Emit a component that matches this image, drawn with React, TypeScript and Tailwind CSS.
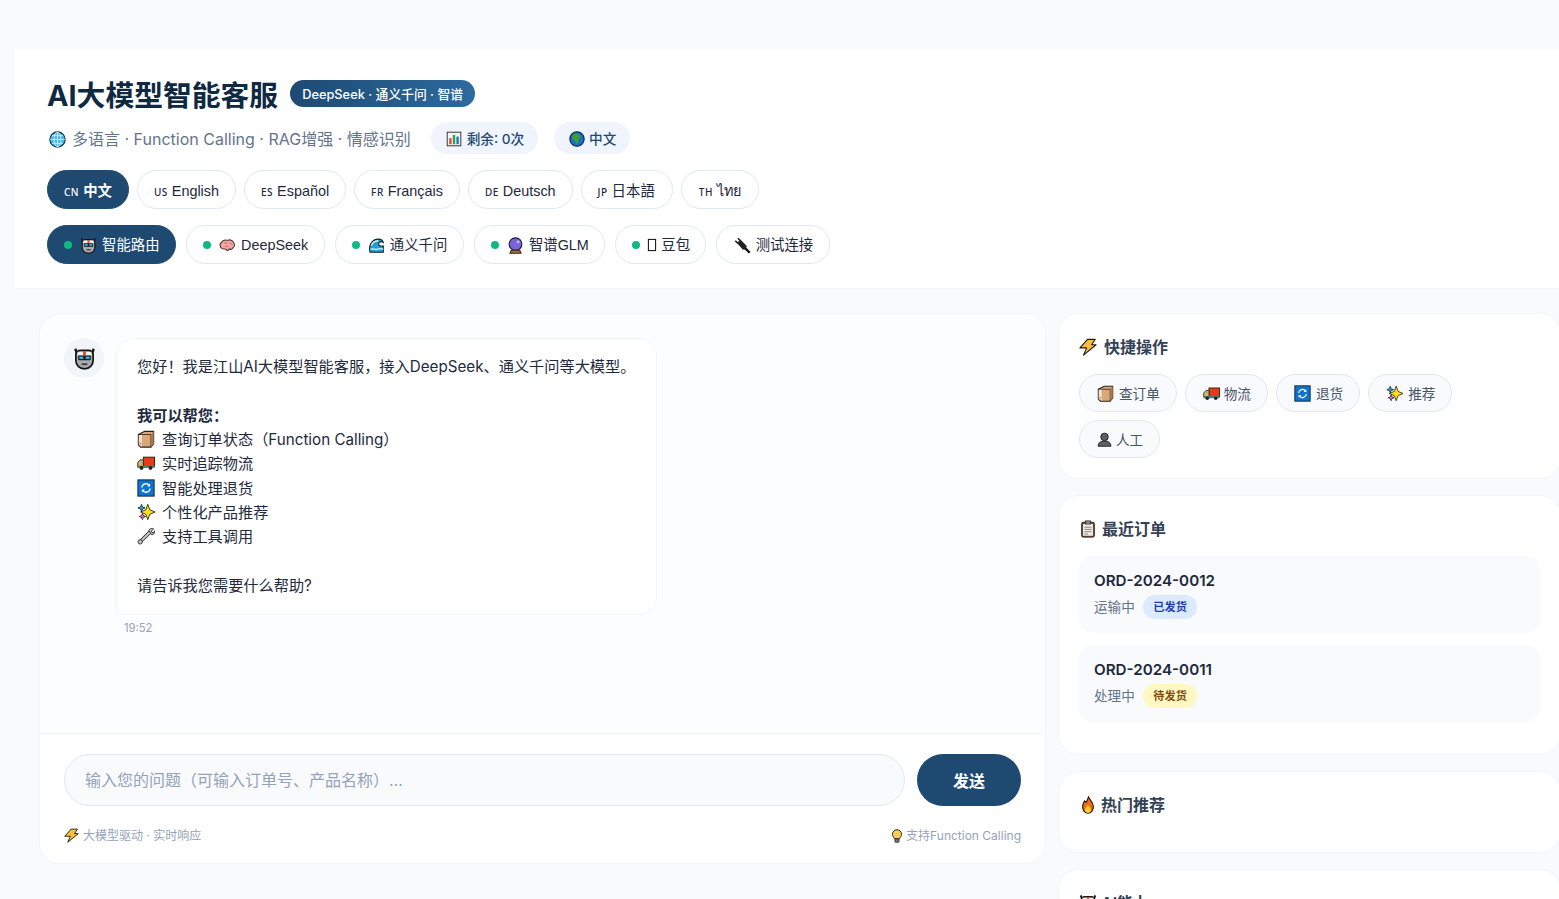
import React from 'react';

type EmojiName =
  | 'robot' | 'brain' | 'wave' | 'crystal' | 'plug' | 'box' | 'truck' | 'refresh' | 'sparkle'
  | 'wrench' | 'bolt' | 'clipboard' | 'fire' | 'bulb' | 'person' | 'globe' | 'chart' | 'earth' | 'tofu';

// windows-style outlined emoji, the stock ones don't look like the screenshot
const emojiShapes: Record<EmojiName, React.ReactNode> = {
  robot: (
    <>
      <path d="M2 1.500 3.500 6M18 1.500 16.500 6" stroke="#1c1c1c" strokeWidth="2.200" fill="none" />
      <path d="M2.500 6.500C2.500 4.500 4.500 3 6.500 3h7c2 0 4 1.500 4 3.500v5C17.500 16 14.500 19 10 19s-7.500-3-7.500-7.500z" fill="#a9abad" stroke="#161616" strokeWidth="1.500" />
      <path d="M4 4.200h12v3H4z" fill="#f2f2f2" />
      <rect x="8.800" y="3.600" width="2.400" height="3.400" fill="#e8442a" />
      <rect x="4.500" y="7.300" width="11" height="4.200" rx="1" fill="#161616" />
      <rect x="5.500" y="8.300" width="3.500" height="2.100" fill="#35b6e8" />
      <rect x="11" y="8.300" width="3.500" height="2.100" fill="#35b6e8" />
      <rect x="7.500" y="14.200" width="5" height="1.500" fill="#3a3a3a" />
    </>
  ),
  brain: (
    <>
      <path d="M3 6.500C4 3.500 8 3 10 4c3-1.500 6 0 7 2.500 1.800 1.500 1.600 5-.6 6-.6 2-3 2.600-4.400 1.500-.6 1.500-2 2.500-3 1.500-.3-1.200-1-1.500-2-1.500-3 .5-5.200-1-5.500-3.500C1 9 1.500 7.200 3 6.500z" fill="#f4a6a8" stroke="#4a2a2c" strokeWidth="1.200" />
      <path d="M6 7c2-1 3 .5 4 1.500M12 6.500c1 1.500 3 1 3.500 2.500M7 11c1.500-.5 3 0 4 1" stroke="#b9595f" strokeWidth="1" fill="none" />
    </>
  ),
  wave: (
    <>
      <path d="M2 16C1 8 6 2.500 12 2.500c3 0 5.500 1.500 6 4-2-1.500-5-1-5.500 1.500-.3 2 2 3 5.500 2.500V18H2.500z" fill="#1f9fd8" stroke="#14202a" strokeWidth="1.300" />
      <path d="M4 10c1-3 4-5.500 8-5.500" stroke="#fff" strokeWidth="1.600" fill="none" />
      <path d="M3 14.500c3-1.500 5 1 7.500 0s5-1 7.500 0" stroke="#d9f3ff" strokeWidth="1.500" fill="none" />
    </>
  ),
  crystal: (
    <>
      <circle cx="10" cy="8.500" r="7.500" fill="#7b62d6" stroke="#241a4a" strokeWidth="1.300" />
      <path d="M13 3.500l.7 1.600 1.600.7-1.600.7-.7 1.600-.7-1.600-1.600-.7 1.600-.7z" fill="#bfe1ff" />
      <path d="M5 15.500h10l1.500 3.500h-13z" fill="#a5703f" stroke="#33210f" strokeWidth="1.200" />
    </>
  ),
  plug: (
    <>
      <path d="M4.500 1.500l3 3M1.500 4.500l3 3" stroke="#222" strokeWidth="1.700" />
      <path d="M3.500 7 7.500 3l7.500 7.500-1 3.500-3.500 1z" fill="#222" />
      <path d="M13 13l5.500 5.500" stroke="#111" strokeWidth="2.800" />
    </>
  ),
  box: (
    <>
      <path d="M1.500 5 8.500 1.500H18.500v13.500L15.500 19H4L1.500 16.500z" fill="#d9a878" stroke="#2a2018" strokeWidth="1.200" />
      <path d="M1.500 5h14V19" fill="none" stroke="#2a2018" strokeWidth=".9" />
      <path d="M15.500 5 18.500 1.500v13.500L15.500 19z" fill="#a8794e" />
      <path d="M2 5.500h3.500V18.500L2 16.200z" fill="#f0e2d2" />
      <circle cx="3.800" cy="15" r="1" fill="#e25c7a" />
    </>
  ),
  truck: (
    <>
      <rect x="7" y="3.500" width="12.500" height="10.500" fill="#e83a17" stroke="#2a1a14" strokeWidth="1" />
      <path d="M.8 14V9.500L3.500 6.500H7v7.500z" fill="#e8b34a" stroke="#20302e" strokeWidth="1" />
      <path d="M2.300 9.800 4 8h2v1.800z" fill="#6ec4d8" />
      <rect x=".5" y="13" width="19" height="2.500" fill="#4d7a78" />
      <circle cx="5" cy="15.500" r="2.100" fill="#222" />
      <circle cx="15" cy="15.500" r="2.100" fill="#222" />
    </>
  ),
  refresh: (
    <>
      <rect x="1" y="1" width="18" height="18" fill="#0f74d0" stroke="#10233a" strokeWidth="1.100" />
      <path d="M5.500 9.500A4.500 4.500 0 0 1 13.500 7M14.500 10.500A4.500 4.500 0 0 1 6.500 13" fill="none" stroke="#fff" strokeWidth="1.400" />
      <path d="M14.500 5v3.200h-3.200zM5.500 15v-3.200h3.200z" fill="#fff" />
    </>
  ),
  sparkle: (
    <>
      <path d="M12 1.500l2.200 6 5.800 2.500-5.800 2.500-2.200 6-2.200-6L4 10l5.800-2.500z" fill="#ffe21a" stroke="#2b2a10" strokeWidth="1" />
      <path d="M5 1.500l1.100 2.900L9 5.500 6.100 6.600 5 9.500 3.900 6.600 1 5.500l2.900-1.100z" fill="#2aa6d6" stroke="#12222a" strokeWidth=".9" />
      <path d="M6 11.500l1 2.500 2.500 1-2.500 1-1 2.500-1-2.500-2.500-1 2.500-1z" fill="#e47ac2" stroke="#2a1222" strokeWidth=".9" />
    </>
  ),
  wrench: (
    <>
      <path d="M3.500 16.500 14.500 5.500" stroke="#2a2a2a" strokeWidth="4" />
      <path d="M3.500 16.500 14.500 5.500" stroke="#c9c9c9" strokeWidth="2.200" />
      <path d="M13 3.500c1.500-2 4-2.300 5.500-1.500l-2.500 2.500.5 1.500 1.500.5L20 4c.5 2-1 4.500-4 4.500z" fill="#c9c9c9" stroke="#2a2a2a" strokeWidth="1" />
      <circle cx="3.500" cy="16.500" r="2.400" fill="#c9c9c9" stroke="#2a2a2a" strokeWidth="1" />
    </>
  ),
  bolt: (
    <path d="M9.500 1.500h8.500l-4 6h5L5 19l3.500-8H1z" fill="#fbbf3c" stroke="#1d1a12" strokeWidth="1.200" strokeLinejoin="round" />
  ),
  clipboard: (
    <>
      <rect x="3" y="2.500" width="14" height="16.500" rx="1.500" fill="#7a5230" stroke="#1f140b" strokeWidth="1" />
      <rect x="4.500" y="4.500" width="11" height="13" fill="#eeeeee" />
      <rect x="7" y="1" width="6" height="3.500" fill="#8c8c8c" stroke="#222" strokeWidth=".8" />
      <path d="M6 8h8M6 10.500h8M6 13h8M6 15.500h4" stroke="#7c7c7c" strokeWidth="1" />
    </>
  ),
  fire: (
    <>
      <path d="M10.500 1c1 3 5.500 5.500 5.500 11 0 4-2.700 7-6 7s-6-3-6-7c0-3 1.500-4.500 2-6.500C7.500 6.500 8 7 8 7c1.200-2 2-4 2.500-6z" fill="#f26a1b" stroke="#1f1208" strokeWidth="1.200" />
      <path d="M10 10c1 2 3.300 3 3.300 5.500 0 2-1.500 3.200-3.300 3.200s-3.300-1.200-3.300-3.200C6.700 13.500 9 12 10 10z" fill="#ffd21f" />
    </>
  ),
  bulb: (
    <>
      <path d="M10 1a6.500 6.500 0 0 0-6.500 6.500c0 2.800 1.900 4.200 2.900 6.500h7.200c1-2.300 2.900-3.700 2.900-6.500A6.500 6.500 0 0 0 10 1z" fill="#fdc95c" stroke="#1c1a12" strokeWidth="1.300" />
      <rect x="7" y="14" width="6" height="5" rx="1" fill="#777" stroke="#1c1a12" strokeWidth="1" />
    </>
  ),
  person: (
    <>
      <circle cx="10" cy="6.500" r="5" fill="#5f5f5f" stroke="#1f1f1f" strokeWidth="1.200" />
      <path d="M1.500 19c0-5 3.500-7 8.500-7s8.500 2 8.500 7z" fill="#5f5f5f" stroke="#1f1f1f" strokeWidth="1.200" />
    </>
  ),
  globe: (
    <>
      <circle cx="10" cy="10" r="9" fill="#48b6e6" stroke="#12303e" strokeWidth="1.300" />
      <path d="M1.500 10h17M10 1.500v17M3.500 5.500h13M3.500 14.500h13" stroke="#e4f7ff" strokeWidth=".9" fill="none" />
      <ellipse cx="10" cy="10" rx="4" ry="8.800" stroke="#e4f7ff" strokeWidth=".9" fill="none" />
    </>
  ),
  chart: (
    <>
      <rect x="1.500" y="1.500" width="17" height="17" fill="#f4f4f4" stroke="#333" strokeWidth="1.200" />
      <rect x="4" y="9" width="3" height="7.500" fill="#e2483c" />
      <rect x="8.500" y="5" width="3" height="11.500" fill="#2fa14f" />
      <rect x="13" y="7" width="3" height="9.500" fill="#1f78c8" />
    </>
  ),
  earth: (
    <>
      <circle cx="10" cy="10" r="9" fill="#1670c9" stroke="#0c1f33" strokeWidth="1.300" />
      <path d="M6 3.500c3-1 7 0 8 3 .5 2-2 2.500-2 5s-1.500 5-3 5.500c-1-2-.5-4-2-5s-3-2-3-3.500 1-4 2-5z" fill="#3f9e2e" />
    </>
  ),
  tofu: <rect x="5.500" y="3" width="9" height="14" fill="#fff" stroke="#111" strokeWidth="1.300" />,
};

function Emoji({ name, size, className = '' }: { name: EmojiName; size: number; className?: string }) {
  return (
    <svg viewBox="0 0 20 20" width={size} height={size} className={`inline-block shrink-0 align-[-3px] ${className}`}>
      {emojiShapes[name]}
    </svg>
  );
}

const langs = [
  { code: 'CN', name: '中文', active: true, padding: 'px-4' },
  { code: 'US', name: 'English', padding: 'px-4' },
  { code: 'ES', name: 'Español', padding: 'px-4' },
  { code: 'FR', name: 'Français', padding: 'px-4' },
  { code: 'DE', name: 'Deutsch', padding: 'px-4' },
  { code: 'JP', name: '日本語', padding: 'pl-4 pr-[17px]' },
  { code: 'TH', name: 'ไทย', padding: 'pl-[17px] pr-[17px]' },
];

const models: { icon: EmojiName; name: string; active?: boolean; dot?: boolean }[] = [
  { icon: 'robot', name: '智能路由', active: true, dot: true },
  { icon: 'brain', name: 'DeepSeek', dot: true },
  { icon: 'wave', name: '通义千问', dot: true },
  { icon: 'crystal', name: '智谱GLM', dot: true },
  { icon: 'tofu', name: '豆包', dot: true },
  { icon: 'plug', name: '测试连接' },
];

const quick: { icon: EmojiName; name: string; iconClass: string }[] = [
  { icon: 'box', name: '查订单', iconClass: 'mr-[5px] ml-[1px]' },
  { icon: 'truck', name: '物流', iconClass: 'mr-1 ml-[1px]' },
  { icon: 'refresh', name: '退货', iconClass: 'mr-[5px] ml-[1px]' },
  { icon: 'sparkle', name: '推荐', iconClass: 'mr-[5px] ml-[1px]' },
  { icon: 'person', name: '人工', iconClass: 'mr-1 ml-[1px]' },
];

const features: { icon: EmojiName; text: string }[] = [
  { icon: 'box', text: '查询订单状态\uFF08Function Calling\uFF09' },
  { icon: 'truck', text: '实时追踪物流' },
  { icon: 'refresh', text: '智能处理退货' },
  { icon: 'sparkle', text: '个性化产品推荐' },
  { icon: 'wrench', text: '支持工具调用' },
];

const orders = [
  { id: 'ORD-2024-0012', state: '运输中', badge: '已发货', badgeClass: 'bg-[#dbeafe] text-[#1e40af]' },
  { id: 'ORD-2024-0011', state: '处理中', badge: '待发货', badgeClass: 'bg-[#fef9c3] text-[#854d0e]' },
];

function Card({ title, icon, iconClass, className, children }: { title: string; icon: EmojiName; iconClass: string; className: string; children?: React.ReactNode }) {
  return (
    <div className={`bg-white ring-1 ring-[#f1f5f9] rounded-[20px] px-5 pt-5 ${className}`}>
      <h3 className="text-[16px] leading-[26px] font-semibold text-[#334155]">
        <Emoji name={icon} size={18} className={iconClass} />
        {title}
      </h3>
      {children}
    </div>
  );
}

export default function App() {
  return (
    <div className="h-[899px] overflow-hidden bg-[#f8fafc] pt-[49px] pl-[15px] font-['Inter','Noto_Sans_CJK_SC',sans-serif]">
      {/* Header */}
      <header className="h-[240px] bg-white border-b border-[#f1f5f9] px-8 pt-[26px]">
        <div className="flex items-center gap-3 h-10">
          <h1 className="mt-[2px] text-[28.8px] leading-10 font-bold text-[#0f2942]">AI大模型智能客服</h1>
          <span className="-mt-[3px] pt-[2px] rounded-full bg-gradient-to-r from-[#1e4a72] to-[#2d6a9f] px-3 h-[27px] flex items-center text-[12.8px] font-medium text-white">DeepSeek · 通义千问 · 智谱</span>
        </div>
        <div className="flex items-center mt-[7px] h-8">
          <Emoji name="globe" size={17} className="ml-[2px] mr-[6px] mt-[2px]" />
          <span className="mt-[2px] text-[16px] text-[#64748b] mr-5">多语言 · Function Calling · RAG增强 · 情感识别</span>
          <span className="h-8 pt-[2px] rounded-full bg-[#eff4fd] pl-[15px] pr-[14px] flex items-center text-[13.6px] font-medium text-[#1e4a72] mr-4">
            <Emoji name="chart" size={16} className="mr-[5px]" />
            剩余: 0次
          </span>
          <span className="h-8 pt-[2px] rounded-full bg-[#eff4fd] pl-[15px] pr-[14px] flex items-center text-[13.6px] font-medium text-[#1e4a72]">
            <Emoji name="earth" size={16} className="mr-[4px]" />
            中文
          </span>
        </div>
        <div className="flex gap-2 mt-4">
          {langs.map((l) => (
            <button
              key={l.code}
              className={`h-[39px] pt-1 rounded-full border text-[14.4px] font-['Liberation_Sans','Noto_Sans_CJK_SC',sans-serif] ${l.padding} ${l.active ? 'bg-[#1e4a72] border-[#1e4a72] text-white font-semibold' : 'bg-white border-[#e2e8f0] text-[#1e293b]'}`}
            >
              <span className="text-[10px] font-medium tracking-[0.5px] font-['Noto_Sans',sans-serif] mr-1">{l.code}</span>
              {l.name}
            </button>
          ))}
        </div>
        <div className="flex gap-[10px] mt-4">
          {models.map((m) => (
            <button
              key={m.name}
              className={`h-[39px] pt-[1px] rounded-full pl-4 border flex items-center text-[14.4px] font-['Liberation_Sans','Noto_Sans_CJK_SC',sans-serif] ${m.icon === 'tofu' ? 'pr-[14.5px]' : 'pr-[15.5px]'} ${m.active ? 'bg-[#1e4a72] border-[#1e4a72] text-white' : 'bg-white border-[#e2e8f0] text-[#1e293b]'}`}
            >
              {m.dot && <span className="w-2 h-2 rounded-full bg-[#10b981] mr-2" />}
              {m.icon === 'tofu' ? (
                <Emoji name="tofu" size={16} className="-ml-1 mr-[1px]" />
              ) : (
                <Emoji name={m.icon} size={17} className={m.dot ? 'mr-[5px]' : 'mr-[5px] ml-[1px]'} />
              )}
              <span className="mt-[2px]">{m.name}</span>
            </button>
          ))}
        </div>
      </header>

      <div className="flex gap-[14px] pl-[25px] pt-[25px] w-[1545px]">
        {/* Chat */}
        <section className="w-[1005px] h-[549px] shrink-0 bg-white ring-1 ring-[#f1f5f9] rounded-[20px] flex flex-col">
          <div className="h-[420px] px-6 pt-6 flex gap-3 bg-[#fcfdfe] rounded-t-[20px] border-b border-[#f1f5f9]">
            <div className="w-10 h-10 rounded-full bg-[#f1f5f9] flex items-center justify-center shrink-0">
              <Emoji name="robot" size={23} />
            </div>
            <div>
              <div className="w-[541px] bg-white border border-[#f1f5f9] rounded-[18px] rounded-bl-[4px] pl-5 pr-4 py-4 text-[15.2px] leading-[24.32px] text-[#1e293b]">
                <p>{'您好\uFF01我是江山AI大模型智能客服\uFF0C接入DeepSeek、通义千问等大模型。'}</p>
                <br />
                <p className="font-semibold">{'我可以帮您\uFF1A'}</p>
                {features.map((f) => (
                  <p key={f.text}>
                    <Emoji name={f.icon} size={18} className="mr-[7px]" />
                    {f.text}
                  </p>
                ))}
                <br />
                <p>请告诉我您需要什么帮助?</p>
              </div>
              <div className="mt-[5px] ml-2 text-[11.2px] text-[#94a3b8]">19:52</div>
            </div>
          </div>
          <div className="px-6 pt-5">
            <div className="flex gap-3">
              <input
                className="flex-1 h-[52px] rounded-full bg-[#f8fafc] border border-[#e2e8f0] px-5 text-[16px] placeholder:text-[#94a3b8]"
                placeholder={'输入您的问题\uFF08可输入订单号、产品名称\uFF09...'}
              />
              <button className="w-[104px] h-[52px] pt-[2px] rounded-full bg-[#1e4a72] text-white text-[16px] font-semibold">发送</button>
            </div>
            <div className="flex justify-between mt-[21px] text-[12px] leading-[18px] text-[#94a3b8]">
              <span>
                <Emoji name="bolt" size={15} className="mr-1" />
                大模型驱动 · 实时响应
              </span>
              <span>
                <Emoji name="bulb" size={14} className="mr-[2px]" />
                支持Function Calling
              </span>
            </div>
          </div>
        </section>

        {/* Sidebar */}
        <aside className="w-[501px] shrink-0 flex flex-col gap-[18px]">
          <Card title="快捷操作" icon="bolt" iconClass="mr-[7px]" className="h-[164px]">
            <div className="flex flex-wrap gap-2 mt-[14px]">
              {quick.map((q) => (
                <button key={q.name} className="h-[38px] rounded-full bg-[#f8fafc] border border-[#e2e8f0] px-4 text-[13.6px] text-[#475569] flex items-center">
                  <Emoji name={q.icon} size={q.icon === 'person' ? 15 : 17} className={q.iconClass} />
                  <span className="mt-[2px]">{q.name}</span>
                </button>
              ))}
            </div>
          </Card>
          <Card title="最近订单" icon="clipboard" iconClass="mr-[5px]" className="h-[258px]">
            <div className="mt-[14px] flex flex-col gap-3">
              {orders.map((o) => (
                <div key={o.id} className="h-[77px] rounded-[14px] bg-[#f8fafc] px-[15px] pt-[13px]">
                  <div className="text-[15.2px] leading-6 font-semibold text-[#1e293b]">{o.id}</div>
                  <div className="flex items-center gap-2 mt-[2px] text-[13.6px] text-[#64748b]">
                    {o.state}
                    <span className={`rounded-full text-[11.2px] font-semibold h-6 px-[10.5px] flex items-center ${o.badgeClass}`}>{o.badge}</span>
                  </div>
                </div>
              ))}
            </div>
          </Card>
          <Card title="热门推荐" icon="fire" iconClass="mr-1" className="h-[80px]" />
          <Card title="AI能力" icon="robot" iconClass="mr-[4px]" className="h-[100px]" />
        </aside>
      </div>
    </div>
  );
}
